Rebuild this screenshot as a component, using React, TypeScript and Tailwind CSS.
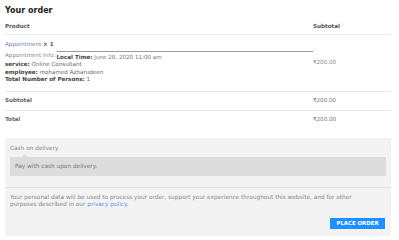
import React from "react";

const font = { fontFamily: "'DejaVu Sans', 'Liberation Sans', sans-serif" };

export default function App() {
  return (
    <div
      className="w-[399px] h-[240px] bg-white overflow-hidden text-[#666] pl-[5px] pr-[8px]"
      style={font}
    >
      <h3 className="pt-[6px] text-[8px] leading-[10px] font-semibold text-[#222]">
        Your order
      </h3>

      {/* order table */}
      <div className="mt-[3px] text-[5.6px]">
        <div className="flex h-[16px] items-center border-b border-[#ececec]">
          <div className="w-[308px] font-semibold text-[#555]">Product</div>
          <div className="font-semibold text-[#555]">Subtotal</div>
        </div>

        <div className="flex items-center border-b border-[#e6e6e6] pt-[6px] pb-[7px]">
          <div className="w-[308px] leading-[7.5px]">
            <div className="text-[#6b87a8]">
              Appointment <span className="font-semibold text-[#555]">× 1</span>
            </div>
            <div className="flex mt-[2px]">
              <span className="text-[#8a8a8a] pt-[1px] pr-[1px]">Appointment Info:</span>
              <div className="flex-1 border-t border-[#9a9a9a] pt-[2px]">
                <span className="font-semibold text-[#444]">Local Time:</span>{" "}
                <span className="text-[#777]">June 28, 2020 11:00 am</span>
              </div>
            </div>
            <div className="text-[#666]">
              <span className="font-semibold text-[#444]">service:</span> Online Consultant
            </div>
            <div className="text-[#666]">
              <span className="font-semibold text-[#444]">employee:</span> mohamed Azharudeen
            </div>
            <div className="text-[#666]">
              <span className="font-semibold text-[#444]">Total Number of Persons:</span> 1
            </div>
          </div>
          <div className="text-[#888]">₹200.00</div>
        </div>

        <div className="flex h-[19px] items-center border-b border-[#e6e6e6]">
          <div className="w-[308px] font-semibold text-[#666]">Subtotal</div>
          <div className="text-[#777]">₹200.00</div>
        </div>
        <div className="flex h-[17px] items-center">
          <div className="w-[308px] font-semibold text-[#666]">Total</div>
          <div className="text-[#777]">₹200.00</div>
        </div>
      </div>

      {/* payment */}
      <div className="mt-[10px] bg-[#f3f3f3] h-[98px] text-[5.8px]">
        <div className="px-[5px] pt-[7px]">
          <div className="text-[#888] leading-[7px]">Cash on delivery</div>
          <div className="relative mt-[5px] bg-[#dcdcdc] h-[19px] flex items-center px-[5px] text-[#777]">
            <span className="absolute -top-[3px] left-[12px] w-0 h-0 border-l-[3px] border-r-[3px] border-b-[3px] border-l-transparent border-r-transparent border-b-[#dcdcdc]" />
            Pay with cash upon delivery.
          </div>
        </div>
        <div className="mt-[11px] border-t border-[#e2e2e2] px-[5px] pt-[6px] leading-[7px] text-[#888] whitespace-nowrap">
          Your personal data will be used to process your order, support your experience throughout this website, and for other
          <br />
          purposes described in our <span className="text-[#6d8fe0]">privacy policy</span>.
        </div>
        <div className="flex justify-end pr-[6px] mt-[10px]">
          <button className="bg-[#1e90ff] text-white font-bold text-[5.4px] h-[11px] w-[55px]">
            PLACE ORDER
          </button>
        </div>
      </div>
    </div>
  );
}
